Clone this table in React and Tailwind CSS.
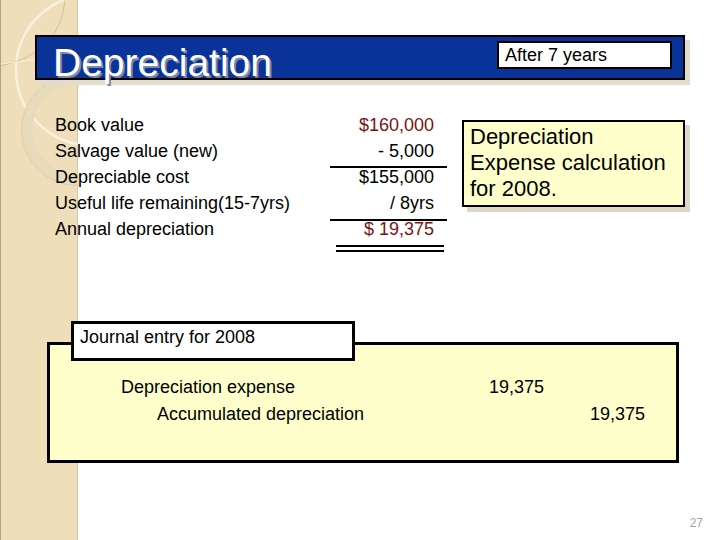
import React from "react";

const rows = [
  { label: "Book value", value: "$160,000", red: true },
  { label: "Salvage value (new)", value: "- 5,000" },
  { label: "Depreciable cost", value: "$155,000" },
  { label: "Useful life remaining(15-7yrs)", value: "/ 8yrs" },
  { label: "Annual depreciation", value: "$ 19,375", red: true },
];

function SideStrip() {
  return (
    <div className="absolute left-0 top-0 h-full w-[78px] bg-[#eedfba] border-l border-[#b3a27e] border-r border-r-[#d6c6a2]">
      <svg width="78" height="540" className="block">
        <circle cx="90" cy="70" r="75" fill="none" stroke="#f8f1df" strokeWidth="2.5" />
        <path d="M64 0 Q60 52 0 66" fill="none" stroke="#cbb88f" strokeWidth="0.8" />
        <path d="M0 64 L62 56" fill="none" stroke="#f6ecd4" strokeWidth="1" />
        <circle cx="76" cy="130" r="50" fill="none" stroke="#e8dbbb" strokeWidth="11" />
        <circle cx="76" cy="130" r="55.5" fill="none" stroke="#dccb9f" strokeWidth="0.8" />
      </svg>
    </div>
  );
}

export default function App() {
  return (
    <div className="relative w-[720px] h-[540px] overflow-hidden bg-white font-['Liberation_Sans',Arial,sans-serif] text-black">
      <SideStrip />

      <div className="relative flex flex-col pt-[35px]">
        {/* title bar */}
        <div className="ml-[35px] w-[650px] h-[45px] bg-[#0a3399] border-2 border-black shadow-[5px_5px_0_#e3dccb] flex justify-between">
          <div className="pl-[16px] pt-[6px] text-[39px] leading-[39px] text-white [text-shadow:2px_2px_0_#7d88aa]">
            Depreciation
          </div>
          <div className="mt-[4px] mr-[11px] w-[175px] h-[28px] bg-white border-2 border-black pl-[6px] text-[18px] leading-[24px]">
            After 7 years
          </div>
        </div>

        {/* calculation */}
        <div className="mt-[32px] h-[140px] flex">
          <div className="ml-[55px] w-[275px] text-[18px] leading-[26px]">
            {rows.map((r) => (
              <div key={r.label}>{r.label}</div>
            ))}
          </div>
          <div className="w-[117px] text-[18px] leading-[26px] text-right">
            <div className="pr-[13px] text-[#7b1315]">{rows[0].value}</div>
            <div className="pr-[13px]">{rows[1].value}</div>
            <div className="mt-[2px] mb-[-4px] h-[2px] bg-black" />
            <div className="pr-[13px]">{rows[2].value}</div>
            <div className="pr-[13px]">{rows[3].value}</div>
            <div className="mt-[3px] mb-[-5px] h-[2px] bg-black" />
            <div className="pr-[13px] text-[#7b1315]">{rows[4].value}</div>
            <div className="mt-[3px] ml-[6px] mr-[3px] h-[2px] bg-black" />
            <div className="mt-[3px] ml-[6px] mr-[3px] h-[2px] bg-black" />
          </div>
          <div className="ml-[15px] mt-[8px] w-[223px] h-[87px] bg-[#ffffcc] border-2 border-black shadow-[5px_5px_0_#dcd7c6] pl-[6px] pt-[2px] text-[22px] leading-[26px]">
            <div>Depreciation</div>
            <div>Expense calculation</div>
            <div>for 2008.</div>
          </div>
        </div>

        {/* journal entry */}
        <div className="mt-[69px] ml-[47px] w-[632px] flex flex-col">
          <div className="relative z-10 ml-[24px] w-[284px] h-[40px] bg-white border-[3px] border-black pl-[6px] text-[18px] leading-[26px]">
            Journal entry for 2008
          </div>
          <div className="mt-[-19px] h-[121px] bg-[#ffffcc] border-[3px] border-black pt-[29px] text-[18px] leading-[27px]">
            <div className="flex pl-[71px]">
              <span className="w-[368px]">Depreciation expense</span>
              <span>19,375</span>
            </div>
            <div className="flex pl-[107px]">
              <span className="w-[433px]">Accumulated depreciation</span>
              <span>19,375</span>
            </div>
          </div>
        </div>

        <div className="mt-[53px] pr-[17px] text-right text-[12px] leading-[14px] text-[#a3a3a3]">
          27
        </div>
      </div>
    </div>
  );
}
